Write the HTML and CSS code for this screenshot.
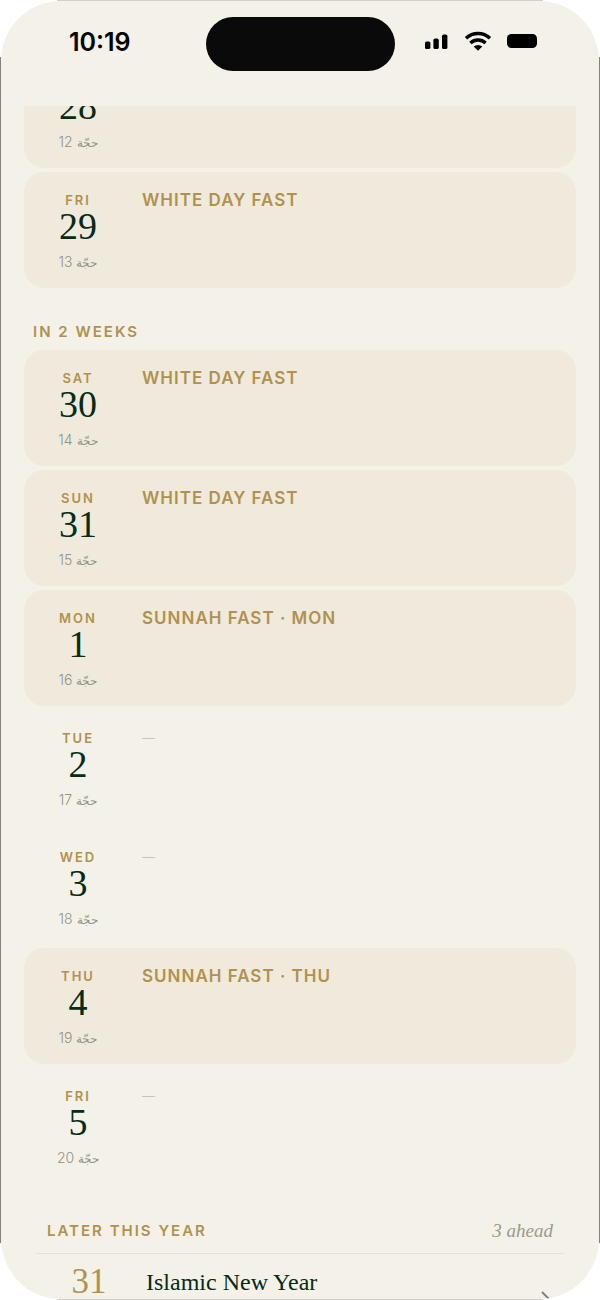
FILE: index.html
```
<!DOCTYPE html>
<html lang="en">
  <head>
    <meta charset="UTF-8" />
    <meta name="viewport" content="width=device-width, initial-scale=1.0" />
    <title>Fasting calendar</title>
    <link rel="stylesheet" href="styles.css">
  </head>
  <body>
    <div class="phone">
      <div class="screen">
        <header class="status-bar">
          <div class="time">10:19</div>
          <div class="island"></div>
          <div class="status-icons">
            <svg width="24" height="16" viewBox="0 0 24 16">
              <rect x="0" y="8.6" width="5.4" height="7.4" rx="1.6" />
              <rect x="8.4" y="5.6" width="5.4" height="10.4" rx="1.6" />
              <rect x="17" y="1.6" width="5.4" height="14.4" rx="1.6" />
            </svg>
            <svg width="28" height="20" viewBox="0 0 28 20">
              <path d="M2 7.2a17.6 17.6 0 0 1 24 0" fill="none" stroke="#000" stroke-width="3.4" />
              <path d="M6.4 12a11.2 11.2 0 0 1 15.2 0" fill="none" stroke="#000" stroke-width="3.4" />
              <path d="M9.7 15.6a6.4 6.4 0 0 1 8.6 0L14 19.8z" />
            </svg>
            <svg width="30" height="14" viewBox="0 0 30 14">
              <rect width="30" height="14" rx="4.5" />
            </svg>
          </div>
        </header>

        <main class="scroll">
          <section class="week this-week">
            <article class="day fast">
              <div class="date">
                <span class="weekday">THU</span>
                <span class="number">28</span>
                <span class="hijri">12 <span lang="ar">حجّة</span></span>
              </div>
            </article>
            <article class="day fast">
              <div class="date">
                <span class="weekday">FRI</span>
                <span class="number">29</span>
                <span class="hijri">13 <span lang="ar">حجّة</span></span>
              </div>
              <p class="event">WHITE DAY FAST</p>
            </article>
          </section>

          <h2 class="week-title">IN 2 WEEKS</h2>
          <section class="week">
            <article class="day fast">
              <div class="date">
                <span class="weekday">SAT</span>
                <span class="number">30</span>
                <span class="hijri">14 <span lang="ar">حجّة</span></span>
              </div>
              <p class="event">WHITE DAY FAST</p>
            </article>
            <article class="day fast">
              <div class="date">
                <span class="weekday">SUN</span>
                <span class="number">31</span>
                <span class="hijri">15 <span lang="ar">حجّة</span></span>
              </div>
              <p class="event">WHITE DAY FAST</p>
            </article>
            <article class="day fast">
              <div class="date">
                <span class="weekday">MON</span>
                <span class="number">1</span>
                <span class="hijri">16 <span lang="ar">حجّة</span></span>
              </div>
              <p class="event">SUNNAH FAST · MON</p>
            </article>
            <article class="day">
              <div class="date">
                <span class="weekday">TUE</span>
                <span class="number">2</span>
                <span class="hijri">17 <span lang="ar">حجّة</span></span>
              </div>
              <p class="event none">—</p>
            </article>
            <article class="day">
              <div class="date">
                <span class="weekday">WED</span>
                <span class="number">3</span>
                <span class="hijri">18 <span lang="ar">حجّة</span></span>
              </div>
              <p class="event none">—</p>
            </article>
            <article class="day fast">
              <div class="date">
                <span class="weekday">THU</span>
                <span class="number">4</span>
                <span class="hijri">19 <span lang="ar">حجّة</span></span>
              </div>
              <p class="event">SUNNAH FAST · THU</p>
            </article>
            <article class="day">
              <div class="date">
                <span class="weekday">FRI</span>
                <span class="number">5</span>
                <span class="hijri">20 <span lang="ar">حجّة</span></span>
              </div>
              <p class="event none">—</p>
            </article>
          </section>

          <section class="later">
            <div class="later-head">
              <h2>LATER THIS YEAR</h2>
              <span class="ahead">3 ahead</span>
            </div>
            <div class="later-row">
              <span class="later-number">31</span>
              <span class="later-name">Islamic New Year</span>
              <svg class="chevron" width="10" height="16" viewBox="0 0 10 16">
                <path d="M1 1l7 7-7 7" fill="none" stroke="#7d857b" stroke-width="2" />
              </svg>
            </div>
          </section>
        </main>
      </div>
    </div>
  </body>
</html>
```
FILE: styles.css
```
* {
  box-sizing: border-box;
}

body {
  margin: 0;
  background: #fff;
  font-family: Inter, "Liberation Sans", sans-serif;
  color: #042c17;
}

h2,
p {
  margin: 0;
}

/* thin bezel lines run along the straight part of each edge */
.phone {
  height: 100vh;
  padding: 1px;
  background:
    linear-gradient(#85817b, #85817b) left center / 1px calc(100% - 114px) no-repeat,
    linear-gradient(#85817b, #85817b) right center / 1px calc(100% - 114px) no-repeat,
    linear-gradient(#d3d0c8, #d3d0c8) center top / calc(100% - 114px) 1px no-repeat,
    linear-gradient(#d3d0c8, #d3d0c8) center bottom / calc(100% - 114px) 1px no-repeat;
}

.screen {
  display: flex;
  flex-direction: column;
  height: 100%;
  overflow: hidden;
  border-radius: 60px;
  background: #f4f1e8;
}

.status-bar {
  display: grid;
  grid-template-columns: 1fr 189px 1fr;
  align-items: start;
  flex: none;
  height: 105px;
  padding-top: 16px;
}

.time {
  padding: 10px 7px 0 0;
  font-size: 25px;
  line-height: 30px;
  font-weight: 600;
  color: #000;
  text-align: center;
}

.island {
  height: 54px;
  border-radius: 27px;
  background: #0a0a0a;
}

.status-icons {
  display: flex;
  align-items: center;
  gap: 15px;
  padding: 14px 0 0 30px;
}

.scroll {
  flex: 1;
  min-height: 0;
  overflow: hidden;
}

.week {
  display: flex;
  flex-direction: column;
  gap: 4px;
  padding: 0 23px;
}

/* list is scrolled part of the way into its first card */
.this-week {
  margin-top: -54px;
}

.day {
  display: flex;
  gap: 28px;
  height: 115px;
  padding: 20px 18px;
  border-radius: 20px;
}

.fast {
  height: 116px;
  background: #f0eadc;
}

.date {
  display: flex;
  flex-direction: column;
  align-items: center;
  width: 72px;
}

.weekday {
  font-size: 13px;
  line-height: 16px;
  font-weight: 600;
  letter-spacing: 2px;
  color: #b0914f;
}

.number {
  font-family: "Liberation Serif", serif;
  font-size: 38px;
  line-height: 36px;
}

.hijri {
  margin-top: 8px;
  font-size: 14px;
  line-height: 20px;
  font-weight: 300;
  color: #8f9388;
  white-space: nowrap;
}

.hijri [lang="ar"] {
  font-family: "DejaVu Sans", sans-serif;
  font-size: 12px;
}

.event {
  font-size: 17px;
  line-height: 16px;
  font-weight: 600;
  letter-spacing: 1px;
  color: #b0914f;
}

.none {
  font-size: 13px;
  font-weight: 400;
  letter-spacing: 0;
  color: #c5c5bb;
}

.week-title,
.later h2 {
  font-size: 15px;
  line-height: 20px;
  font-weight: 600;
  letter-spacing: 2px;
  color: #b0914f;
}

.week-title {
  padding: 34px 32px 8px;
}

.later {
  padding: 37px 35px 0;
}

.later-head {
  display: flex;
  justify-content: space-between;
  align-items: center;
  padding: 0 11px 11px;
  border-bottom: 1px solid #e3e1d8;
}

.ahead {
  font-family: "Liberation Serif", serif;
  font-size: 19px;
  line-height: 22px;
  font-style: italic;
  color: #989b91;
}

.later-row {
  display: flex;
  padding: 11px 13px 28px;
  font-family: "Liberation Serif", serif;
  line-height: 34px;
}

.later-number {
  width: 80px;
  margin-right: 17px;
  font-size: 35px;
  color: #b0914f;
  text-align: center;
}

.later-name {
  flex: 1;
  font-size: 24px;
}

.chevron {
  align-self: flex-end;
  margin-bottom: -8px;
}
```
